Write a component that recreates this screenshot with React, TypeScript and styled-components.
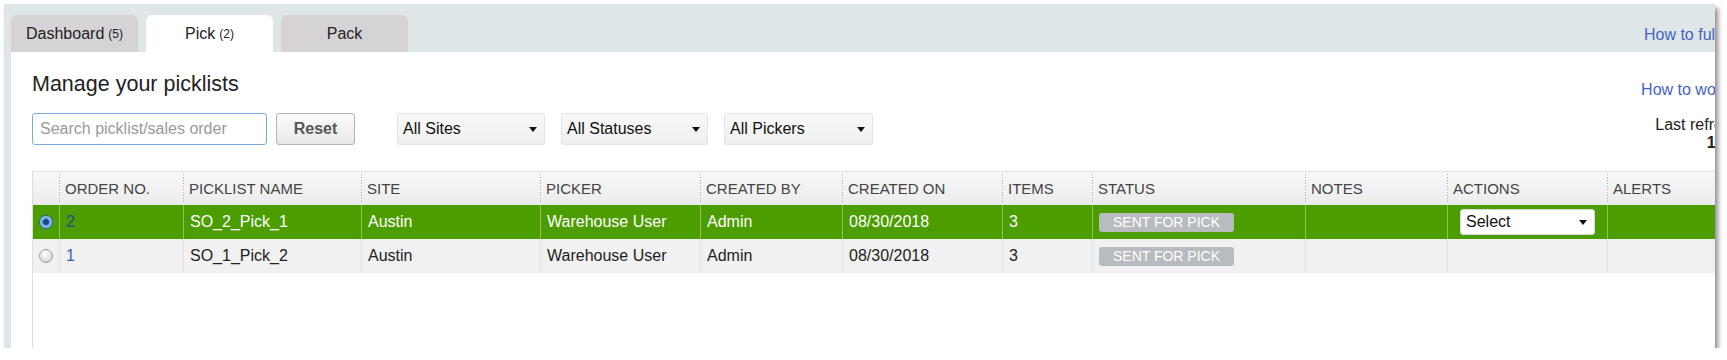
import styled, { createGlobalStyle } from 'styled-components'

const GlobalStyle = createGlobalStyle`
  body {
    margin: 0;
    background: #fff;
    font-family: "Liberation Sans", Arial, sans-serif;
    color: #222;
  }
`

const Frame = styled.div`
  margin: 4px 0 0 4px;
  width: 1711px;
  height: 344px;
  overflow: hidden;
  box-shadow: 3px 4px 5px rgba(0, 0, 0, 0.45);
`

const AppShell = styled.div`
  width: 1788px;
  height: 100%;
  display: flex;
  flex-direction: column;
  background: #dfe6e8;
`

const TabBar = styled.nav`
  height: 48px;
  box-sizing: border-box;
  padding: 11px 12px 0 7px;
  display: flex;
  align-items: flex-start;
  gap: 8px;
`

const Tab = styled.div<{ $active?: boolean }>`
  width: 127px;
  height: 37px;
  display: flex;
  align-items: center;
  justify-content: center;
  border-radius: 6px 6px 0 0;
  background: ${props => (props.$active ? '#fff' : '#d6d3d6')};
  font-size: 16px;
  color: #222;
`

const TabCount = styled.span`
  margin-left: 4px;
  font-size: 12px;
`

const HelpLink = styled.a<{ $push?: boolean }>`
  ${props => (props.$push ? 'margin-left: auto; margin-top: 11px;' : '')}
  color: #4463c4;
  font-size: 16px;
  line-height: 18px;
  text-decoration: none;
  white-space: nowrap;
`

const Panel = styled.main`
  flex: 1;
  min-height: 0;
  margin-left: 7px;
  padding: 20px 30px 0 21px;
  display: flex;
  flex-direction: column;
  background: #fff;
`

const TopRow = styled.div`
  display: flex;
  justify-content: space-between;
  align-items: flex-start;
`

const Title = styled.h1`
  margin: 0;
  font-size: 21.5px;
  font-weight: normal;
  line-height: 24px;
`

const Toolbar = styled.div`
  margin-top: 17px;
  display: flex;
  align-items: center;
`

const SearchInput = styled.input`
  width: 235px;
  height: 32px;
  box-sizing: border-box;
  padding: 0 7px;
  border: 1px solid #7ea9df;
  border-radius: 3px;
  outline: none;
  font: 16px "Liberation Sans", Arial, sans-serif;

  &::placeholder {
    color: #9a9a9a;
  }
`

const ResetButton = styled.button`
  margin-left: 9px;
  width: 79px;
  height: 32px;
  border: 1px solid #b3b3b3;
  border-radius: 3px;
  background: linear-gradient(#fbfbfb, #e8e8e8);
  color: #555;
  font: bold 16px "Liberation Sans", Arial, sans-serif;
`

const Filters = styled.div`
  margin-left: 42px;
  display: flex;
  gap: 16px;
`

const Dropdown = styled.div<{ $w: number; $plain?: boolean }>`
  width: ${props => props.$w}px;
  height: ${props => (props.$plain ? 26 : 32)}px;
  box-sizing: border-box;
  padding: 0 7px 0 5px;
  display: flex;
  align-items: center;
  justify-content: space-between;
  border: 1px solid ${props => (props.$plain ? '#d8d8d8' : '#e3e3e3')};
  border-radius: 3px;
  background: ${props => (props.$plain ? '#fff' : 'linear-gradient(#f9f9f9, #efefef)')};
  font-size: 16px;
  color: #111;
`

const Caret = styled.span`
  width: 0;
  height: 0;
  border-left: 4px solid transparent;
  border-right: 4px solid transparent;
  border-top: 5px solid #111;
`

const RightInfo = styled.div`
  margin-top: 9px;
  display: flex;
  flex-direction: column;
  align-items: flex-end;
  font-size: 16px;
  line-height: 18px;
`

const Refreshed = styled.div`
  margin-top: 17px;
  white-space: nowrap;
`

const RefreshTime = styled.div`
  font-weight: bold;
`

const TableWrap = styled.section`
  flex: 1;
  margin-top: 19px;
  border-left: 1px solid #dedede;
  border-top: 1px solid #e3e3e3;
`

const Grid = styled.table`
  width: 1729px;
  table-layout: fixed;
  border-collapse: separate;
  border-spacing: 0;
`

const Col = styled.col<{ $w?: number }>`
  ${props => (props.$w ? `width: ${props.$w}px;` : '')}
`

const HeadRow = styled.tr`
  height: 33px;
`

const HeadCell = styled.th`
  position: relative;
  padding: 0 6px;
  border-bottom: 1px solid #e6e6e6;
  background: linear-gradient(#f8f8f8, #ececec);
  color: #444;
  font-size: 15px;
  font-weight: normal;
  text-align: left;
  white-space: nowrap;

  &:not(:first-child)::before {
    content: '';
    position: absolute;
    left: 0;
    top: 2px;
    bottom: 2px;
    width: 1px;
    background: repeating-linear-gradient(#a8a8a8 0 1px, transparent 1px 3px);
  }
`

const Row = styled.tr<{ $selected?: boolean }>`
  height: 34px;
  background: ${props => (props.$selected ? '#4b9d00' : '#f1f1f1')};
  color: ${props => (props.$selected ? '#fff' : '#222')};

  & > td + td {
    border-left: 1px solid ${props => (props.$selected ? 'rgba(255, 255, 255, 0.38)' : '#e2e2e2')};
  }
`

const Cell = styled.td<{ $center?: boolean }>`
  padding: 0 6px;
  font-size: 16px;
  white-space: nowrap;
  vertical-align: middle;
  text-align: ${props => (props.$center ? 'center' : 'left')};
  ${props => (props.$center ? 'padding: 0; line-height: 0;' : '')}
`

const OrderLink = styled.a<{ $onGreen?: boolean }>`
  color: ${props => (props.$onGreen ? '#1d4d9c' : '#2f62b5')};
  text-decoration: none;
`

const Radio = styled.span<{ $checked?: boolean }>`
  display: inline-block;
  width: 14px;
  height: 14px;
  box-sizing: border-box;
  border-radius: 50%;
  border: 1px solid ${props => (props.$checked ? '#2b5d96' : '#9c9c9c')};
  background: ${props =>
    props.$checked
      ? 'radial-gradient(circle, #1b4a86 0 2.5px, #5fa3e3 3.5px, #d6ebfc 100%)'
      : 'radial-gradient(circle at 40% 35%, #ffffff, #c9c9c9)'};
`

const StatusBadge = styled.span`
  display: inline-block;
  width: 135px;
  height: 19px;
  line-height: 19px;
  border-radius: 3px;
  background: #b8bbc0;
  color: #fff;
  font-size: 14px;
  text-align: center;
`

const ActionSlot = styled.div`
  margin-left: 6px;
`

const columns = [
  { key: 'radio', label: '', width: 26 },
  { key: 'order', label: 'ORDER NO.', width: 124 },
  { key: 'name', label: 'PICKLIST NAME', width: 178 },
  { key: 'site', label: 'SITE', width: 179 },
  { key: 'picker', label: 'PICKER', width: 160 },
  { key: 'createdBy', label: 'CREATED BY', width: 142 },
  { key: 'createdOn', label: 'CREATED ON', width: 160 },
  { key: 'items', label: 'ITEMS', width: 90 },
  { key: 'status', label: 'STATUS', width: 213 },
  { key: 'notes', label: 'NOTES', width: 142 },
  { key: 'actions', label: 'ACTIONS', width: 160 },
  { key: 'alerts', label: 'ALERTS' },
]

interface IPicklist {
  order: number
  name: string
  site: string
  picker: string
  createdBy: string
  createdOn: string
  items: number
  status: string
}

const picklists: Array<IPicklist> = [
  { order: 2, name: 'SO_2_Pick_1', site: 'Austin', picker: 'Warehouse User', createdBy: 'Admin', createdOn: '08/30/2018', items: 3, status: 'Sent for pick' },
  { order: 1, name: 'SO_1_Pick_2', site: 'Austin', picker: 'Warehouse User', createdBy: 'Admin', createdOn: '08/30/2018', items: 3, status: 'Sent for pick' },
]

const selectedOrder = 2

function App() {
  return (
    <>
      <GlobalStyle />
      <Frame>
        <AppShell>
          <TabBar>
            <Tab>Dashboard<TabCount>(5)</TabCount></Tab>
            <Tab $active>Pick<TabCount>(2)</TabCount></Tab>
            <Tab>Pack</Tab>
            <HelpLink $push href="#">How to fulfill orders</HelpLink>
          </TabBar>

          <Panel>
            <TopRow>
              <div>
                <Title>Manage your picklists</Title>
                <Toolbar>
                  <SearchInput placeholder="Search picklist/sales order" />
                  <ResetButton>Reset</ResetButton>
                  <Filters>
                    <Dropdown $w={148}>All Sites<Caret /></Dropdown>
                    <Dropdown $w={147}>All Statuses<Caret /></Dropdown>
                    <Dropdown $w={149}>All Pickers<Caret /></Dropdown>
                  </Filters>
                </Toolbar>
              </div>
              <RightInfo>
                <HelpLink href="#">How to work with</HelpLink>
                <Refreshed>Last refreshed:</Refreshed>
                <RefreshTime>1:05:17</RefreshTime>
              </RightInfo>
            </TopRow>

            <TableWrap>
              <Grid>
                <colgroup>
                  {columns.map(col => <Col key={col.key} $w={col.width} />)}
                </colgroup>
                <thead>
                  <HeadRow>
                    {columns.map(col => <HeadCell key={col.key}>{col.label}</HeadCell>)}
                  </HeadRow>
                </thead>
                <tbody>
                  {picklists.map(pick => {
                    const selected = pick.order === selectedOrder
                    return (
                      <Row key={pick.order} $selected={selected}>
                        <Cell $center><Radio $checked={selected} /></Cell>
                        <Cell><OrderLink $onGreen={selected} href="#">{pick.order}</OrderLink></Cell>
                        <Cell>{pick.name}</Cell>
                        <Cell>{pick.site}</Cell>
                        <Cell>{pick.picker}</Cell>
                        <Cell>{pick.createdBy}</Cell>
                        <Cell>{pick.createdOn}</Cell>
                        <Cell>{pick.items}</Cell>
                        <Cell><StatusBadge>{pick.status.toUpperCase()}</StatusBadge></Cell>
                        <Cell />
                        <Cell>
                          {selected && (
                            <ActionSlot>
                              <Dropdown $w={135} $plain>Select<Caret /></Dropdown>
                            </ActionSlot>
                          )}
                        </Cell>
                        <Cell />
                      </Row>
                    )
                  })}
                </tbody>
              </Grid>
            </TableWrap>
          </Panel>
        </AppShell>
      </Frame>
    </>
  )
}

export default App
